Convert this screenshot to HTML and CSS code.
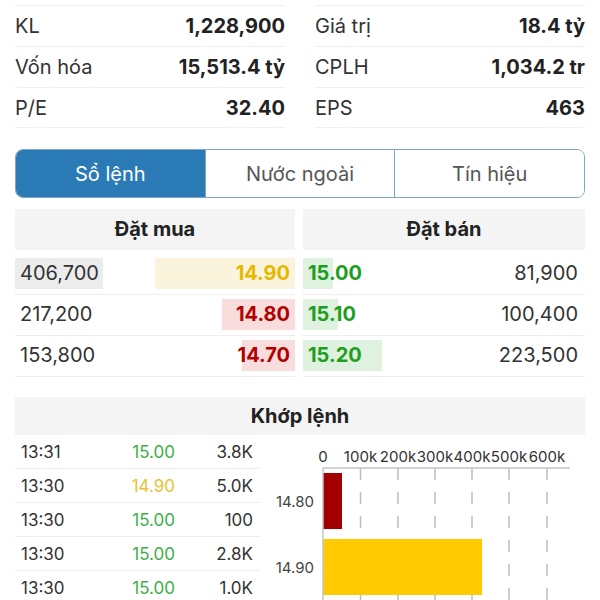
FILE: index.html
```html
<!DOCTYPE html>
<html lang="vi">
<head>
  <meta charset="UTF-8" />
  <meta name="viewport" content="width=device-width, initial-scale=1.0"/>
  <title>Sổ lệnh</title>
  <link rel="stylesheet" href="styles.css">
</head>
<body>
  <!-- Thong tin co phieu -->
  <div class="stats">
    <div class="stats-col">
      <div class="stat"><span>KL</span><b>1,228,900</b></div>
      <div class="stat"><span>Vốn hóa</span><b>15,513.4 tỷ</b></div>
      <div class="stat"><span>P/E</span><b>32.40</b></div>
    </div>
    <div class="stats-col">
      <div class="stat"><span>Giá trị</span><b>18.4 tỷ</b></div>
      <div class="stat"><span>CPLH</span><b>1,034.2 tr</b></div>
      <div class="stat"><span>EPS</span><b>463</b></div>
    </div>
  </div>

  <!-- Tabs -->
  <div class="tabs">
    <button class="tab active">Sổ lệnh</button>
    <button class="tab">Nước ngoài</button>
    <button class="tab">Tín hiệu</button>
  </div>

  <!-- So lenh -->
  <div class="book">
    <div class="side">
      <div class="side-head">Đặt mua</div>
      <div class="book-row">
        <span class="vol hl">406,700</span>
        <span class="price buy yellow" style="background-size: 140px 100%">14.90</span>
      </div>
      <div class="book-row">
        <span class="vol">217,200</span>
        <span class="price buy red" style="background-size: 73px 100%">14.80</span>
      </div>
      <div class="book-row">
        <span class="vol">153,800</span>
        <span class="price buy red" style="background-size: 53px 100%">14.70</span>
      </div>
    </div>
    <div class="side">
      <div class="side-head">Đặt bán</div>
      <div class="book-row">
        <span class="price sell green" style="background-size: 30px 100%">15.00</span>
        <span class="vol">81,900</span>
      </div>
      <div class="book-row">
        <span class="price sell green" style="background-size: 35px 100%">15.10</span>
        <span class="vol">100,400</span>
      </div>
      <div class="book-row">
        <span class="price sell green" style="background-size: 79px 100%">15.20</span>
        <span class="vol">223,500</span>
      </div>
    </div>
  </div>

  <!-- Khop lenh -->
  <div class="match-head">Khớp lệnh</div>
  <div class="match">
    <div class="trades">
      <div class="trade"><span>13:31</span><span class="t-green">15.00</span><span>3.8K</span></div>
      <div class="trade"><span>13:30</span><span class="t-yellow">14.90</span><span>5.0K</span></div>
      <div class="trade"><span>13:30</span><span class="t-green">15.00</span><span>100</span></div>
      <div class="trade"><span>13:30</span><span class="t-green">15.00</span><span>2.8K</span></div>
      <div class="trade"><span>13:30</span><span class="t-green">15.00</span><span>1.0K</span></div>
    </div>

    <svg class="chart" width="325" height="165" viewBox="0 0 325 165">
      <g class="grid">
        <line x1="100.5" y1="33" x2="100.5" y2="165"/>
        <line x1="138" y1="33" x2="138" y2="165"/>
        <line x1="175" y1="33" x2="175" y2="165"/>
        <line x1="212" y1="33" x2="212" y2="165"/>
        <line x1="249" y1="33" x2="249" y2="165"/>
        <line x1="287" y1="33" x2="287" y2="165"/>
      </g>
      <rect x="63" y="38" width="19" height="56" fill="#a30000"/>
      <rect x="63" y="104" width="159" height="56" fill="#ffcb00"/>
      <line class="axis" x1="63" y1="33" x2="310" y2="33"/>
      <line class="axis" x1="63" y1="33" x2="63" y2="165"/>
      <g class="ticks">
        <text x="63" y="27">0</text>
        <text x="100.5" y="27">100k</text>
        <text x="138" y="27">200k</text>
        <text x="175" y="27">300k</text>
        <text x="212" y="27">400k</text>
        <text x="249" y="27">500k</text>
        <text x="287" y="27">600k</text>
      </g>
      <g class="labels">
        <text x="54" y="72">14.80</text>
        <text x="54" y="138">14.90</text>
      </g>
    </svg>
  </div>
</body>
</html>
```

FILE: styles.css
```css
* {
  margin: 0;
  padding: 0;
  box-sizing: border-box;
}

body {
  background: #fff;
  color: #333;
  font-family: 'Inter', 'Roboto', sans-serif;
  font-size: 20px;
  padding: 5px 15px 0;
  overflow: hidden;
}

/* Stats */
.stats {
  display: grid;
  grid-template-columns: 1fr 1fr;
  gap: 30px;
}

.stat {
  display: flex;
  justify-content: space-between;
  align-items: center;
  height: 41px;
  border-top: 1px solid #f0f0f0;
}

.stat:last-child {
  border-bottom: 1px solid #f0f0f0;
}

.stat b {
  color: #222;
  font-weight: 700;
}

/* Tabs */
.tabs {
  display: flex;
  margin-top: 21px;
  height: 49px;
  border: 1.5px solid #7ea6c6;
  border-radius: 8px;
  overflow: hidden;
}

.tab {
  flex: 1;
  border: none;
  background: #fff;
  color: #555;
  font-family: inherit;
  font-size: 20px;
}

.tab + .tab {
  border-left: 1.5px solid #7ea6c6;
}

.tab.active {
  background: #2a7ab6;
  color: #fff;
}

/* Order book */
.book {
  display: grid;
  grid-template-columns: 280px 1fr;
  gap: 8px;
  margin-top: 11px;
}

.side-head {
  height: 41px;
  line-height: 41px;
  background: #f4f4f4;
  text-align: center;
  font-weight: 700;
  color: #222;
  margin-bottom: 4px;
}

.book-row {
  display: flex;
  justify-content: space-between;
  align-items: center;
  padding: 4px 0 5px;
  border-bottom: 1px solid #eee;
}

.book-row span {
  height: 31px;
  line-height: 31px;
}

.vol {
  padding: 0 4px 0 5px;
}

.vol.hl {
  background: #ececec;
}

.price {
  flex: 1;
  font-weight: 700;
  background-repeat: no-repeat;
}

.price.buy {
  text-align: right;
  padding-right: 5px;
  background-position: right top;
}

.price.sell {
  padding-left: 5px;
  background-position: left top;
}

.book .side:last-child .vol {
  padding: 0 7px 0 0;
}

.yellow {
  color: #e6b800;
  background-image: linear-gradient(#faf4dc, #faf4dc);
}

.red {
  color: #b20000;
  background-image: linear-gradient(#f9dcdc, #f9dcdc);
}

.green {
  color: #1e9e1e;
  background-image: linear-gradient(#dff1df, #dff1df);
}

/* Khop lenh */
.match-head {
  margin-top: 20px;
  height: 38px;
  line-height: 38px;
  background: #f4f4f4;
  text-align: center;
  font-weight: 700;
  color: #222;
}

.match {
  display: flex;
}

.trades {
  width: 245px;
}

.trade {
  display: grid;
  grid-template-columns: 79px 75px 1fr;
  height: 34px;
  align-items: center;
  padding: 0 7px 0 6px;
  border-bottom: 1px solid #eee;
  font-size: 17px;
}

.trade span:nth-child(2),
.trade span:nth-child(3) {
  text-align: right;
}

.t-green {
  color: #3daf48;
}

.t-yellow {
  color: #e9c235;
}

.chart {
  display: block;
  font-family: 'Inter', 'Roboto', sans-serif;
}

.grid line {
  stroke: #bdbdbd;
  stroke-width: 1.5;
  stroke-dasharray: 12 12;
}

.axis {
  stroke: #c4c4c4;
  stroke-width: 1.5;
}

.ticks text {
  font-size: 15px;
  fill: #333;
  text-anchor: middle;
}

.labels text {
  font-size: 15px;
  fill: #444;
  text-anchor: end;
}
```
